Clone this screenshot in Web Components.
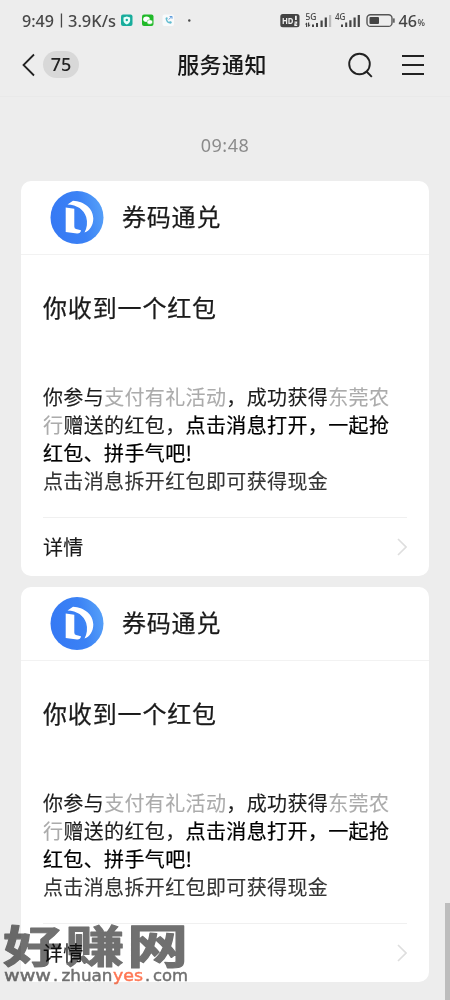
<!DOCTYPE html>
<html lang="zh-CN">
<head>
<meta charset="utf-8">
<title>服务通知</title>
<style>
html,body{margin:0;height:100%;overflow:hidden;background:#ededed}
body{font-family:"Noto Sans CJK SC",sans-serif}
</style>
</head>
<body>
<notice-app></notice-app>
<script>
function define(name, html) {
  const t = document.createElement('template');
  t.innerHTML = html;
  customElements.define(name, class extends HTMLElement {
    constructor() {
      super();
      this.attachShadow({mode: 'open'}).appendChild(t.content.cloneNode(true));
    }
  });
}

define('status-bar', `
<style>
:host{display:flex;height:40px;align-items:center;box-sizing:border-box;padding:0 24px 0 22px;justify-content:space-between;color:#444}
svg{display:block}
</style>
<svg width="180" height="40" font-family="Noto Sans" font-weight="500" fill="#484848">
 <text x="0" y="26.500" font-size="16" textLength="32" lengthAdjust="spacingAndGlyphs">9:49</text>
 <rect x="38.800" y="13.500" width="1.300" height="14"/>
 <text x="46" y="26.500" font-size="16" textLength="48" lengthAdjust="spacingAndGlyphs">3.9K/s</text>
 <rect x="99" y="14.500" width="11.500" height="11.500" rx="2" fill="#18ad9c"/>
 <path d="M101.500 17.500l3.300-.9 3.300.9v3q0 2.500-3.300 4-3.300-1.500-3.300-4z" fill="#e9fffb"/><circle cx="104.800" cy="20" r="1.200" fill="#18ad9c"/>
 <rect x="120" y="14.500" width="11.500" height="11.500" rx="2" fill="#20b928"/>
 <ellipse cx="124.500" cy="19.200" rx="3.300" ry="2.700" fill="#fff"/><ellipse cx="127.800" cy="22" rx="2.900" ry="2.300" fill="#fff" stroke="#20b928" stroke-width=".5"/>
 <rect x="140.500" y="14.500" width="11.500" height="11.500" rx="2" fill="#f8fafb"/>
 <path d="M143.500 18q.2 5.500 5.500 5.800l1-1.700-2-1-1 .8q-1.500-.8-2-2.300l.8-.9-.7-1.800z" fill="#62bcd0"/><path d="M146.800 19.500l3-3m-2.200 0h2.400v2.200" fill="none" stroke="#5f9dde"/>
 <circle cx="167.300" cy="20.500" r="1.200"/>
</svg>
<svg width="148" height="40" fill="#444" font-family="Noto Sans">
 <rect x="2.300" y="14" width="19.200" height="13.200" rx="2.500"/>
 <text x="4" y="24.200" font-size="9.500" font-weight="700" fill="#f1f1f1" textLength="11.500" lengthAdjust="spacingAndGlyphs">HD</text>
 <path d="M17 15.800h1.800v4.200H17zM16.500 21.500h2.700v2.200h-1.400v.8h1.400V26h-2.900v-2.700h1.400v-.6h-1.200z" fill="#f1f1f1"/>
 <text x="27.500" y="19.500" font-size="8" font-weight="500" textLength="11" lengthAdjust="spacingAndGlyphs">5G</text>
 <path d="M27 24.500l1.500-2 .7.700V27H28v-2.500zM30 22.500h1.200v2.300h1.300l-1.800 2.200-.7-.7zM34 24.500h2V27h-2zM38 23h2v4h-2zM42.500 20.500h2.200V27h-2.200zM46.700 17.500h2.200V27h-2.200z"/>
 <path d="M51 15h2.200v12H51z" fill="#bbb"/>
 <text x="57" y="19.500" font-size="8" font-weight="500" textLength="10.500" lengthAdjust="spacingAndGlyphs">4G</text>
 <path d="M63 24.500h2V27h-2zM67.200 22.500h2V27h-2zM71.300 20.200h2.200V27h-2.200zM75.500 17.500h2.200V27h-2.200zM79.700 15h2.200v12h-2.200z"/>
 <rect x="89" y="14.700" width="25" height="11.700" rx="3.500" fill="none" stroke="#555" stroke-width="1.400"/>
 <rect x="91.500" y="17" width="9.500" height="7" rx="1"/><rect x="115.200" y="18.200" width="1.400" height="4.600" rx=".6"/>
 <text x="120.500" y="26.500" font-size="16" font-weight="500" textLength="18.500" lengthAdjust="spacingAndGlyphs">46</text>
 <text x="139.500" y="26" font-size="8.500" font-weight="500" textLength="7.500" lengthAdjust="spacingAndGlyphs">%</text>
</svg>`);

define('nav-bar', `
<style>
:host{display:grid;grid-template-columns:1fr auto 1fr;height:57px;padding:0 26px 7px 22px;box-sizing:border-box;align-items:center;border-bottom:1px solid #e9e9e9}
.back{display:flex;align-items:center;gap:8px}
.badge{width:36px;height:27px;border-radius:14px;background:#d8d8d8;color:#222;font:500 18px/27px "Noto Sans",sans-serif;text-align:center}
h1{margin:-3px 2px 0 0;font-size:22px;letter-spacing:.4px;line-height:30px;font-weight:500;color:#181818}
.actions{display:flex;justify-content:flex-end;align-items:center;gap:27px}
svg{display:block;fill:none;stroke:#222}
.find{margin-right:2px}
</style>
<div class="back"><svg width="13" height="24" stroke-width="1.800"><path d="M12 1.500L1.500 12 12 22.500"/></svg><span class="badge">75</span></div>
<h1><slot></slot></h1>
<div class="actions">
<svg class="find" width="26" height="26" stroke-width="1.900"><circle cx="12.500" cy="12" r="10.300"/><path d="M19.500 19.500l5.300 5.300"/></svg>
<svg width="22" height="24" stroke-width="2.100"><path d="M0 3h22M0 12h22M0 21h22"/></svg></div>`);

define('brand-logo', `
<style>:host{display:block;width:54px;height:54px}svg{display:block}</style>
<svg width="54" height="54" viewBox="0 0 54 54">
<defs><linearGradient id="g" x1="0" y1=".6" x2="1" y2=".4"><stop offset="0" stop-color="#3679f4"/><stop offset=".6" stop-color="#3b82f5"/><stop offset="1" stop-color="#559ff8"/></linearGradient></defs>
<circle cx="27" cy="26.500" r="26.500" fill="url(#g)"/>
<path d="M15.700 16.500L24.300 17.700V35.500Q24.300 37.600 26 38L31 39.200Q30.500 42.700 27 42.500L15.700 41Z" fill="#fff"/>
<path d="M17.500 13.400L23 9.700C34 10 43.300 17.500 43.300 27.500C43.300 34.500 39.500 40 34.500 41.500C37 37 37.800 31.500 36.200 26C34 18.500 27 13.700 17.500 13.400Z" fill="#fff"/>
</svg>`);

define('notice-card', `
<style>
:host{display:flex;flex-direction:column;height:395px;border-radius:10px;background:#fff;color:#1a1a1a;overflow:hidden}
header{display:flex;align-items:center;gap:18px;height:74px;box-sizing:border-box;padding:0 29px;border-bottom:1px solid #f2f2f2;font-size:24px;letter-spacing:.8px;line-height:36px;-webkit-text-stroke:.25px}
header slot{display:block;margin-bottom:3px}
section{padding:0 22px;display:flex;flex-direction:column;flex:1}
h2{margin:33px 0 57px;font-size:24px;letter-spacing:.85px;line-height:38px;font-weight:400;-webkit-text-stroke:.25px}
.body{font-size:20px;letter-spacing:.37px;line-height:28px;height:112px;white-space:nowrap;color:#1c1c1c;-webkit-text-stroke:.12px}
footer{margin-top:22px;border-top:1px solid #f0f0f0;display:flex;flex:1;align-items:center;justify-content:space-between;font-size:20px;letter-spacing:.37px;padding-bottom:2px;-webkit-text-stroke:.12px}
svg{display:block;fill:none;stroke:#dedede;stroke-width:1.600;margin-top:2px}
</style>
<header><brand-logo></brand-logo><slot name="sender"></slot></header>
<section><h2><slot name="title"></slot></h2><div class="body"><slot></slot></div>
<footer><span>详情</span><svg width="10" height="18"><path d="M1 1l8 8-8 8"/></svg></footer></section>`);

define('notice-message', `
<style>:host{display:block}.g{color:#ababab}.b{color:#000;-webkit-text-stroke:.22px #000}.d{color:#333}
notice-card div{height:28px}</style>
<notice-card><span slot="sender">券码通兑</span><span slot="title">你收到一个红包</span>
<div>你参与<span class="g">支付有礼活动</span>，成功获得<span class="g">东莞农</span></div>
<div><span class="g">行</span>赠送的红包，<span class="b">点击消息打开，一起抢</span></div>
<div class="b">红包、拼手气吧!</div>
<div class="d">点击消息拆开红包即可获得现金</div></notice-card>`);

define('site-watermark', `
<style>:host{display:block;width:200px;height:100px}svg{display:block}</style>
<svg width="200" height="100">
<g fill="#707070" stroke="#707070" stroke-width="1.100" stroke-linejoin="round" font-family="Noto Sans CJK SC" font-weight="700" font-size="46">
<text transform="translate(3 62.500) scale(1.280 .96)">好</text><text transform="translate(65.500 62.500) scale(1.280 .96)">赚</text><text transform="translate(127 62.500) scale(1.330 1.020)">网</text></g>
<g font-family="DejaVu Sans" font-size="16" fill="#707070" stroke="#707070" stroke-width=".45">
<text x="4" y="80.500" textLength="47" lengthAdjust="spacingAndGlyphs">www</text><text x="53" y="80.500">.</text>
<text x="61.500" y="80.500" textLength="51" lengthAdjust="spacingAndGlyphs">zhuan</text>
<text x="113" y="80.500" textLength="30" lengthAdjust="spacingAndGlyphs" fill="#ff7653" stroke="#ff7653">yes</text><text x="145" y="80.500">.</text>
<text x="153" y="80.500" textLength="35" lengthAdjust="spacingAndGlyphs">com</text></g>
</svg>`);

define('notice-app', `
<style>
:host{display:block;position:relative;width:450px;height:1000px;background:#ededed;overflow:hidden}
time{display:block;margin-top:35px;height:26px;line-height:26px;text-align:center;color:#8b8b8b;font-family:"Noto Sans",sans-serif;font-size:18px;letter-spacing:.5px}
main{display:flex;flex-direction:column;gap:11px;padding:23px 21px 0}
site-watermark{position:absolute;left:0;top:900px;mix-blend-mode:multiply}
.scroll{position:absolute;right:0;top:903px;width:5px;height:97px;background:#bdbdbd}
</style>
<status-bar></status-bar><nav-bar>服务通知</nav-bar>
<time>09:48</time>
<main><notice-message></notice-message><notice-message></notice-message></main>
<div class="scroll"></div><site-watermark></site-watermark>`);
</script>
</body>
</html>
